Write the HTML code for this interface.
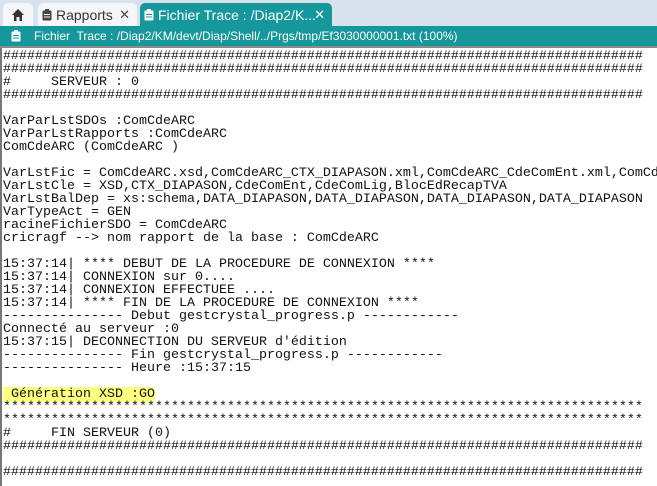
<!DOCTYPE html>
<html><head><meta charset="utf-8"><style>
body{margin:0;width:657px;height:486px;overflow:hidden;background:#fff;font-family:"Liberation Sans",sans-serif;position:relative}
.bar{position:absolute;left:0;top:0;width:657px;height:26px;background:#d8e2ec}
.tab{position:absolute;top:3px;height:23px;border-radius:5px 5px 0 0;font-size:14px;line-height:24px;box-sizing:border-box;white-space:nowrap;overflow:hidden}
.t1{left:3px;width:30px;background:#f4f6f9}
.t2{left:38px;width:99px;background:#f4f6f9;color:#333;padding-left:18px}
.t3{left:140px;width:192px;background:#16979c;color:#fff;padding-left:18px}
.x{position:absolute;right:7px;top:0;font-size:13px}
.title{position:absolute;left:0;top:26px;width:657px;height:20px;background:#16979c;color:#fff;font-size:12px;line-height:20px;padding-left:34px;box-sizing:border-box;white-space:nowrap}
.sep{position:absolute;left:0;top:46px;width:657px;height:2px;background:#8a8a8a}
.lb{position:absolute;left:0;top:48px;width:2px;height:438px;background:#777}
.wrap{position:absolute;left:3px;top:50px;width:654px;height:436px;overflow:hidden}
pre{margin:0;font-family:"Liberation Mono",monospace;font-size:13.33px;line-height:13px;color:#111;white-space:pre}
.hl{background:#ffff80}
.clip{position:absolute;left:4px;top:6px;width:10px;height:12px}
</style></head><body>
<div class="bar"></div>
<div class="tab t1"><svg width="30" height="23"><path d="M9 12 L15 6 L21 12 L19 12 L19 18 L16.5 18 L16.5 14 L13.5 14 L13.5 18 L11 18 L11 12 Z" fill="#333"/></svg></div>
<div class="tab t2"><svg class="clip" viewBox="0 0 10 12"><rect x="0.5" y="1.5" width="9" height="10" rx="1" fill="#444"/><rect x="3" y="0" width="4" height="3" fill="#444"/><rect x="2" y="5" width="6" height="1" fill="#fff"/><rect x="2" y="7.5" width="6" height="1" fill="#fff"/></svg>Rapports<span class="x" style="color:#444">✕</span></div>
<div class="tab t3"><svg class="clip" viewBox="0 0 10 12"><rect x="0.5" y="1.5" width="9" height="10" rx="1" fill="#fff"/><rect x="3" y="0" width="4" height="3" fill="#fff"/><rect x="2" y="5" width="6" height="1" fill="#16979c"/><rect x="2" y="7.5" width="6" height="1" fill="#16979c"/></svg>Fichier Trace : /Diap2/K...<span class="x">✕</span></div>
<div class="title"><svg style="position:absolute;left:11px;top:4px" width="10" height="12" viewBox="0 0 10 12"><rect x="0.5" y="1.5" width="9" height="10" rx="1" fill="#fff"/><rect x="3" y="0" width="4" height="3" fill="#fff"/><rect x="2" y="5" width="6" height="1" fill="#16979c"/><rect x="2" y="7.5" width="6" height="1" fill="#16979c"/></svg>Fichier&nbsp; Trace&nbsp;: /Diap2/KM/devt/Diap/Shell/../Prgs/tmp/Ef3030000001.txt (100%)</div>
<div class="sep"></div>
<div class="lb"></div>
<div class="wrap"><pre>################################################################################
################################################################################
#     SERVEUR : 0
################################################################################

VarParLstSDOs :ComCdeARC
VarParLstRapports :ComCdeARC
ComCdeARC (ComCdeARC )

VarLstFic = ComCdeARC.xsd,ComCdeARC_CTX_DIAPASON.xml,ComCdeARC_CdeComEnt.xml,ComCdeARC
VarLstCle = XSD,CTX_DIAPASON,CdeComEnt,CdeComLig,BlocEdRecapTVA
VarLstBalDep = xs:schema,DATA_DIAPASON,DATA_DIAPASON,DATA_DIAPASON,DATA_DIAPASON
VarTypeAct = GEN
racineFichierSDO = ComCdeARC
cricragf --&gt; nom rapport de la base : ComCdeARC

15:37:14| **** DEBUT DE LA PROCEDURE DE CONNEXION ****
15:37:14| CONNEXION sur 0....
15:37:14| CONNEXION EFFECTUEE ....
15:37:14| **** FIN DE LA PROCEDURE DE CONNEXION ****
--------------- Debut gestcrystal_progress.p ------------
Connecté au serveur :0
15:37:15| DECONNECTION DU SERVEUR d'édition
--------------- Fin gestcrystal_progress.p ------------
--------------- Heure :15:37:15

<span class="hl"> Génération XSD :GO</span>
********************************************************************************
********************************************************************************
#     FIN SERVEUR (0)
################################################################################

################################################################################</pre></div>
</body></html>
